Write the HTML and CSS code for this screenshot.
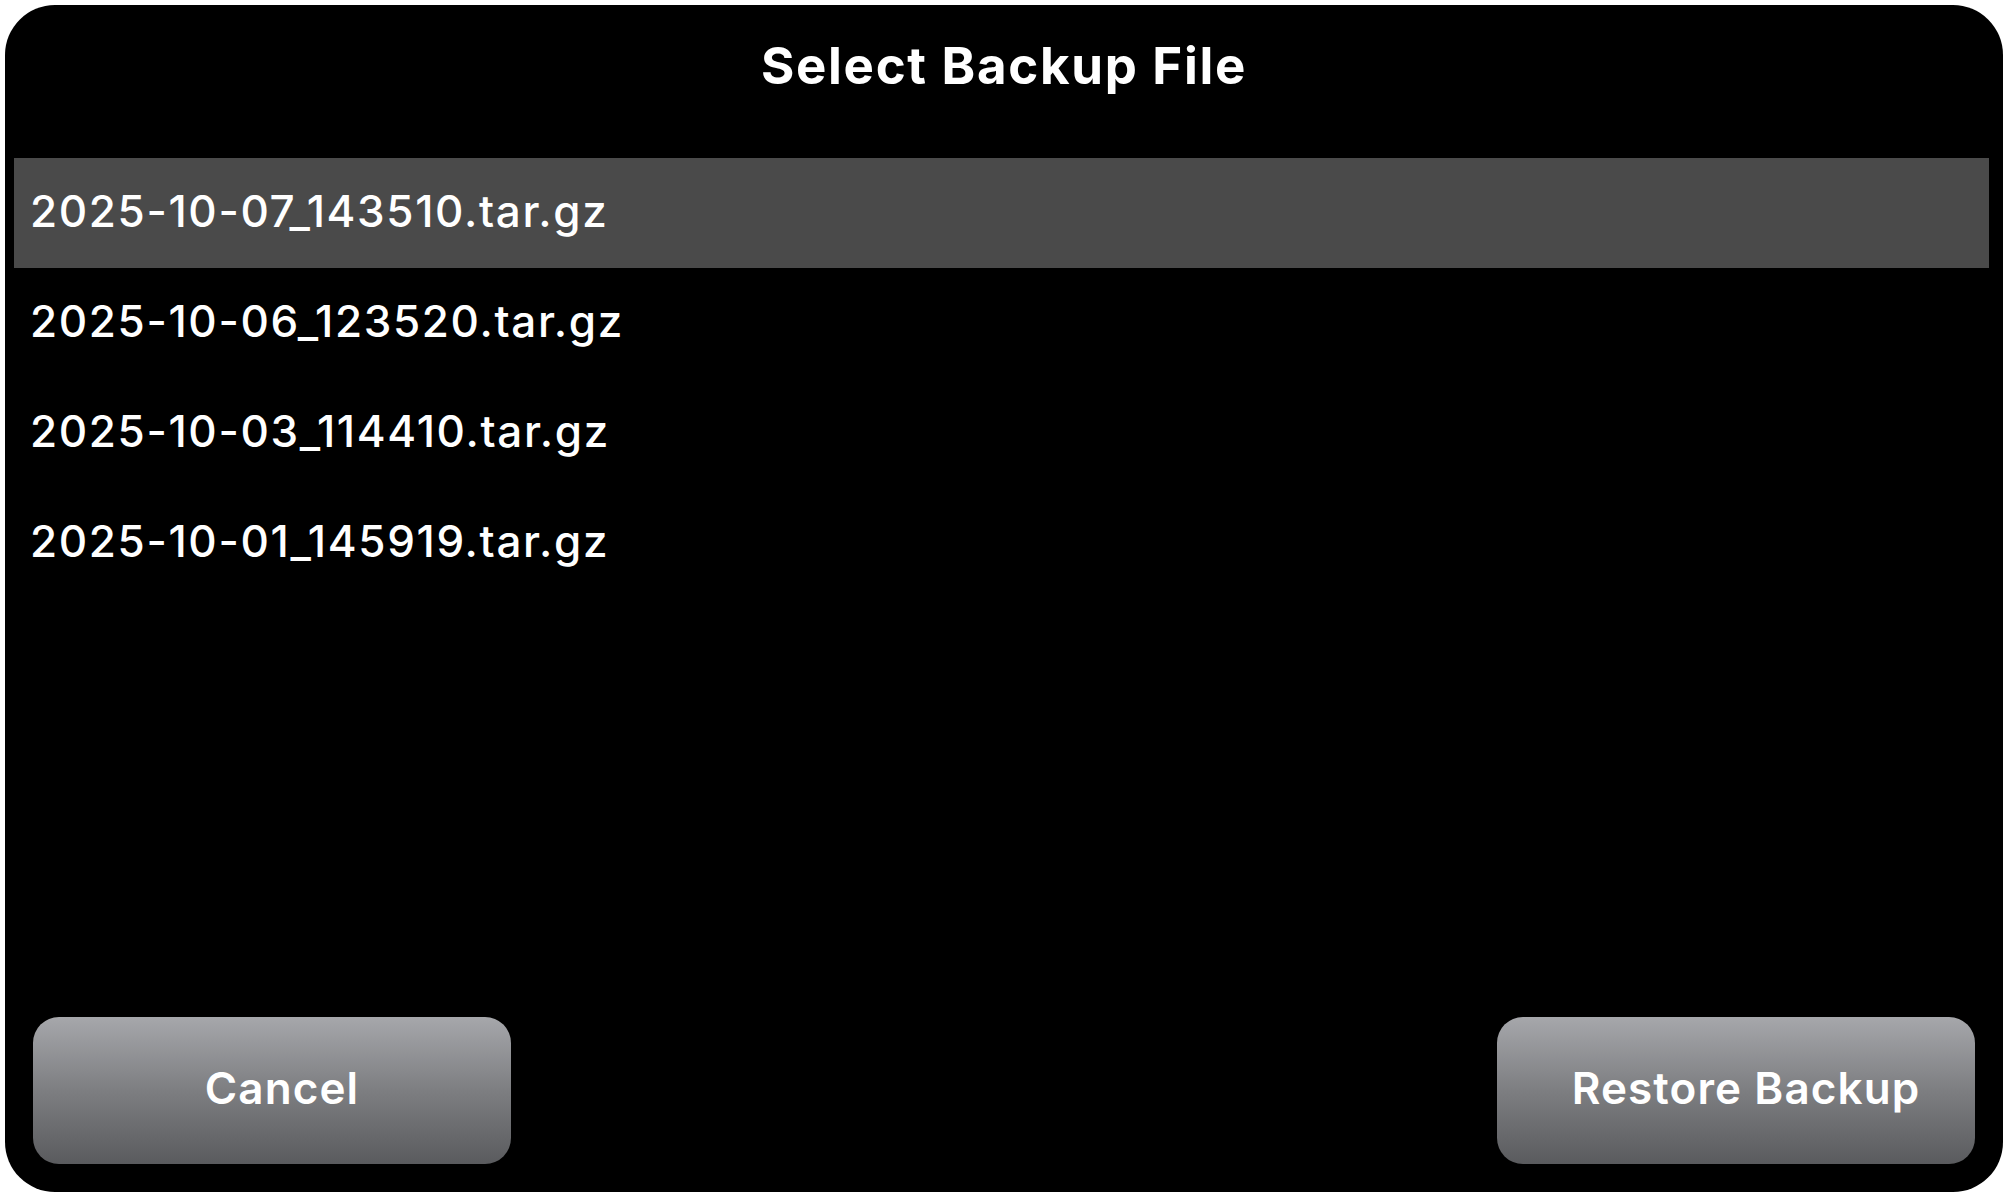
FILE: index.html
```html
<!DOCTYPE html>
<html lang="en">
<head>
<meta charset="utf-8">
<title>Select Backup File</title>
<link rel="stylesheet" href="styles.css">
</head>
<body>
<div class="dialog">
  <h1 class="title">Select Backup File</h1>
  <ul class="file-list">
    <li class="file-row selected">2025-10-07_143510.tar.gz</li>
    <li class="file-row">2025-10-06_123520.tar.gz</li>
    <li class="file-row">2025-10-03_114410.tar.gz</li>
    <li class="file-row">2025-10-01_145919.tar.gz</li>
  </ul>
  <div class="footer">
    <button class="btn">Cancel</button>
    <button class="btn">Restore Backup</button>
  </div>
</div>
</body>
</html>
```
FILE: styles.css
```css
* { box-sizing: border-box; }
html, body {
  margin: 0;
  padding: 0;
  background: #ffffff;
}
body {
  font-family: Inter, "Noto Sans", "Liberation Sans", sans-serif;
  color: #ffffff;
}
.dialog {
  margin: 5px;
  width: 1998px;
  height: 1187px;
  background: #000000;
  border-radius: 50px;
  display: flex;
  flex-direction: column;
  overflow: hidden;
}
.title {
  margin: 31px 0 0 0;
  font-size: 51px;
  line-height: 60px;
  font-weight: 700;
  text-align: center;
  letter-spacing: 1.7px;
}
.file-list {
  list-style: none;
  margin: 62px 14px 0 9px;
  padding: 0;
  flex: 1;
}
.file-row {
  height: 110px;
  line-height: 106px;
  padding: 0 0 4px 16px;
  font-size: 44px;
  font-weight: 500;
  letter-spacing: 1.65px;
}
.file-row.selected {
  background: #4a4a4a;
}
.footer {
  display: flex;
  justify-content: space-between;
  padding: 0 28px 28px 28px;
}
.btn {
  width: 478px;
  height: 147px;
  border: none;
  border-radius: 26px;
  background: linear-gradient(to bottom, #a6a7ab 0%, #7d7e81 50%, #5a5b5e 100%);
  color: #ffffff;
  font-family: Inter, "Noto Sans", "Liberation Sans", sans-serif;
  font-size: 44px;
  font-weight: 600;
  letter-spacing: 1.1px;
  padding: 0 0 5px 20px;
  cursor: pointer;
}
```
